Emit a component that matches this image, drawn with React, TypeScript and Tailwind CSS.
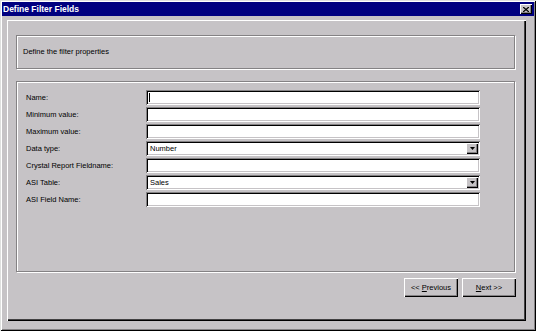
const raised =
  "bg-[#c6c3c6] shadow-[inset_1px_1px_0_#fff,inset_-1px_-1px_0_#000,inset_-2px_-2px_0_#848284]";
const sunken =
  "bg-white shadow-[inset_1px_1px_0_#848284,inset_-1px_-1px_0_#fff,inset_2px_2px_0_#000,inset_-2px_-2px_0_#c6c3c6]";
const etched = "border border-[#848284] shadow-[inset_1px_1px_0_#fff,1px_1px_0_#fff]";

const fields = [
  { label: "Name:", value: "", caret: true },
  { label: "Minimum value:", value: "" },
  { label: "Maximum value:", value: "" },
  { label: "Data type:", value: "Number", combo: true },
  { label: "Crystal Report Fieldname:", value: "" },
  { label: "ASI Table:", value: "Sales", combo: true },
  { label: "ASI Field Name:", value: "" },
];

function ComboArrow() {
  return (
    <div className={`absolute right-[2px] top-[2px] w-[12px] h-[11px] flex items-center justify-center ${raised}`}>
      <svg width="5" height="3" viewBox="0 0 5 3">
        <path d="M0 0h5L2.5 3z" fill="#000" />
      </svg>
    </div>
  );
}

function Field({ label, value, caret, combo }: { label: string; value: string; caret?: boolean; combo?: boolean }) {
  return (
    <div className="flex items-center h-[15px] mb-[2px]">
      <div className="w-[120px] text-black">{label}</div>
      <div className={`relative w-[334px] h-[15px] flex items-center pl-[4px] ${sunken}`}>
        {caret && <div className="w-px h-[9px] bg-black -ml-[1px]" />}
        <span className="text-black">{value}</span>
        {combo && <ComboArrow />}
      </div>
    </div>
  );
}

export default function App() {
  return (
    <div className="w-[536px] h-[331px] bg-[#c6c3c6] p-[2px] flex flex-col font-['Liberation_Sans',Arial,sans-serif] text-[7.5px] shadow-[inset_1px_1px_0_#dedfde,inset_-1px_-1px_0_#000,inset_2px_2px_0_#fff,inset_-2px_-2px_0_#848284]">
      <div className="h-[14px] bg-[#000080] flex items-center justify-between pl-[1px] pr-[2px]">
        <span className="text-white font-bold text-[8.5px]">Define Filter Fields</span>
        <div className={`w-[12px] h-[10px] flex items-center justify-center ${raised}`}>
          <svg width="6" height="5" viewBox="0 0 6 5">
            <path d="M0 0L6 5M6 0L0 5" stroke="#000" strokeWidth="1.3" />
          </svg>
        </div>
      </div>

      <div className="ml-[5px] mt-[4px] w-[519px] h-[301px] pl-[9px] pt-[15px] shadow-[inset_1px_1px_0_#fff,inset_-1px_-1px_0_#000,inset_-2px_-2px_0_#424142]">
        <div className={`w-[499px] h-[34px] flex items-center pl-[6px] ${etched}`}>
          <span className="text-black">Define the filter properties</span>
        </div>

        <div className={`mt-[12px] w-[499px] h-[191px] pl-[9px] pt-[8px] ${etched}`}>
          {fields.map((f) => (
            <Field key={f.label} {...f} />
          ))}
        </div>

        <div className="mt-[6px] w-[500px] flex justify-end gap-[4px]">
          <button className={`w-[54px] h-[19px] flex items-center justify-center text-black ${raised}`}>
            &lt;&lt;&nbsp;<span className="underline">P</span>revious
          </button>
          <button className={`w-[54px] h-[19px] flex items-center justify-center text-black ${raised}`}>
            <span className="underline">N</span>ext &gt;&gt;
          </button>
        </div>
      </div>
    </div>
  );
}
